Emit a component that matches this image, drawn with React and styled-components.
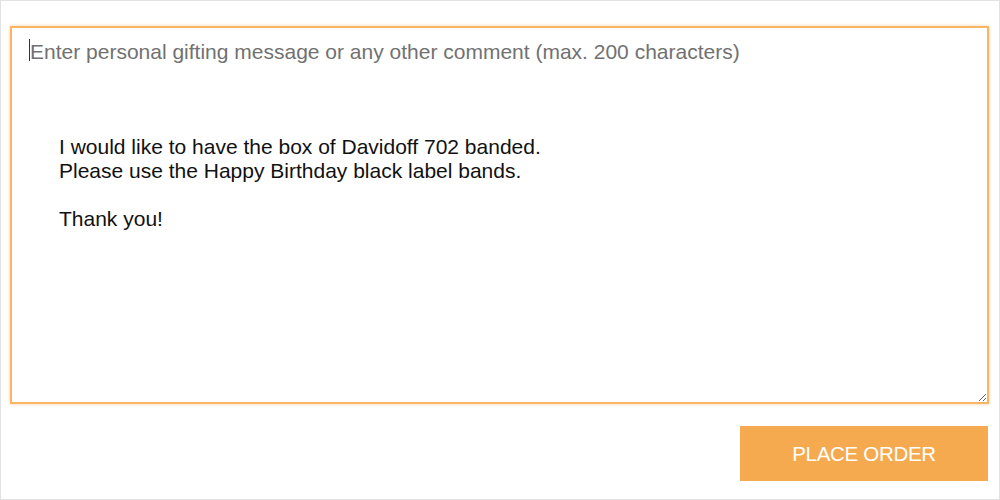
import React from 'react';
import styled, { createGlobalStyle } from 'styled-components';

const GlobalStyle = createGlobalStyle`
	html, body {
		margin: 0;
		padding: 0;
		background: #fff;
	}
`;

const Page = styled.div`
	box-sizing: border-box;
	width: 1000px;
	height: 500px;
	border: 1px solid #e2e2e2;
	padding: 25px 10px 0 11px;
	display: flex;
	flex-direction: column;
	align-items: flex-end;
	font-family: 'Liberation Sans', Arial, sans-serif;
`;

const Field = styled.div`
	position: relative;
	width: 979px;
	height: 378px;
`;

const TextArea = styled.textarea`
	box-sizing: border-box;
	width: 100%;
	height: 100%;
	border: 2px solid #f8b565;
	box-shadow: 0 0 3px rgba(248, 170, 80, 0.6);
	outline: none;
	padding: 12px 18px;
	font-family: 'Liberation Sans', Arial, sans-serif;
	font-size: 21px;
	color: #222;
	resize: vertical;
	caret-color: #333;

	&::placeholder {
		color: #717171;
	}
`;

const Note = styled.div`
	position: absolute;
	left: 49px;
	top: 109px;
	font-size: 21px;
	line-height: 24px;
	color: #111;
	pointer-events: none;
`;

const Caret = styled.span`
	position: absolute;
	left: 19px;
	top: 13px;
	width: 1px;
	height: 22px;
	background: #333;
`;

const Button = styled.button`
	margin-top: 22px;
	margin-right: 1px;
	width: 248px;
	height: 55px;
	border: none;
	background: #f5aa4f;
	color: #fff;
	font-family: 'Liberation Sans', Arial, sans-serif;
	font-size: 20.5px;
	letter-spacing: -0.3px;
	cursor: pointer;
`;

const App = () => (
	<>
		<GlobalStyle />
		<Page>
			<Field>
				<TextArea placeholder='Enter personal gifting message or any other comment (max. 200 characters)' />
				<Caret />
				<Note>
					I would like to have the box of Davidoff 702 banded.
					<br />
					Please use the Happy Birthday black label bands.
					<br />
					<br />
					Thank you!
				</Note>
			</Field>
			<Button type='submit'>PLACE ORDER</Button>
		</Page>
	</>
);

export default App;
